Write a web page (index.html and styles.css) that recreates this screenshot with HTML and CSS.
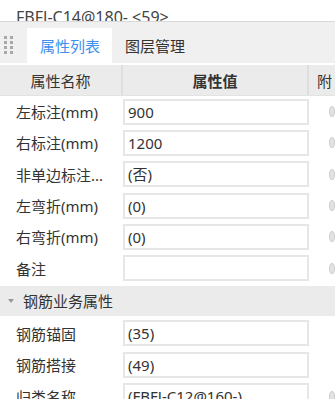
FILE: index.html
```html
<!DOCTYPE html>
<html lang="zh-CN">
<head>
    <meta charset="UTF-8">
    <meta name="viewport" content="width=device-width, initial-scale=1.0">
    <title>属性列表</title>
    <link rel="stylesheet" href="styles.css">
</head>
<body>
    <div class="top-strip">
        <span class="top-text">FBFJ-C14@180- &lt;59&gt;</span>
    </div>

    <div class="tabbar">
        <div class="grip">
            <i></i><i></i><i></i><i></i><i></i><i></i><i></i><i></i>
        </div>
        <div class="tab active">属性列表</div>
        <div class="tab">图层管理</div>
    </div>

    <div class="grid">
        <!-- 表头 -->
        <div class="head-row">
            <div class="cell head">属性名称</div>
            <div class="cell head strong">属性值</div>
            <div class="cell head extra">附</div>
        </div>

        <div class="row">
            <div class="cell name">左标注(mm)</div>
            <div class="cell"><div class="box">900</div></div>
            <div class="cell extra"><span class="radio"></span></div>
        </div>
        <div class="row">
            <div class="cell name">右标注(mm)</div>
            <div class="cell"><div class="box">1200</div></div>
            <div class="cell extra"><span class="radio"></span></div>
        </div>
        <div class="row">
            <div class="cell name">非单边标注...</div>
            <div class="cell"><div class="box">(否)</div></div>
            <div class="cell extra"><span class="radio"></span></div>
        </div>
        <div class="row">
            <div class="cell name">左弯折(mm)</div>
            <div class="cell"><div class="box">(0)</div></div>
            <div class="cell extra"><span class="radio"></span></div>
        </div>
        <div class="row">
            <div class="cell name">右弯折(mm)</div>
            <div class="cell"><div class="box">(0)</div></div>
            <div class="cell extra"><span class="radio"></span></div>
        </div>
        <div class="row">
            <div class="cell name">备注</div>
            <div class="cell"><div class="box"></div></div>
            <div class="cell extra"><span class="radio"></span></div>
        </div>

        <div class="group">
            <span class="caret"></span>
            钢筋业务属性
        </div>

        <div class="row">
            <div class="cell name">钢筋锚固</div>
            <div class="cell"><div class="box">(35)</div></div>
            <div class="cell extra"></div>
        </div>
        <div class="row">
            <div class="cell name">钢筋搭接</div>
            <div class="cell"><div class="box">(49)</div></div>
            <div class="cell extra"></div>
        </div>
        <div class="row">
            <div class="cell name">归类名称</div>
            <div class="cell"><div class="box">(FBFJ-C12@160-)</div></div>
            <div class="cell extra"><span class="radio"></span></div>
        </div>
    </div>
</body>
</html>
```

FILE: styles.css
```css
body {
    margin: 0;
    padding: 0;
    font-family: "Noto Sans", "Noto Sans CJK SC", sans-serif;
    font-size: 15px;
    color: #333;
    background-color: #fff;
    overflow: hidden;
    height: 399px;
}

.top-strip {
    height: 21px;
    overflow: hidden;
    border-bottom: 1px solid #d9d9d9;
    background-color: #fff;
}

.top-text {
    display: block;
    padding-left: 16px;
    margin-top: 6px;
    font-size: 16px;
    line-height: 22px;
    color: #444;
    white-space: pre;
}

.tabbar {
    display: flex;
    align-items: flex-end;
    height: 41px;
    background-color: #f0f0f0;
}

.grip {
    display: grid;
    grid-template-columns: 3px 3px;
    column-gap: 3px;
    row-gap: 2px;
    padding: 0 14px 9px 4px;
}

.grip i {
    width: 3px;
    height: 3px;
    background-color: #a8a8a8;
}

.tab {
    height: 35px;
    line-height: 36px;
    padding: 0 12px 0 13px;
    color: #333;
}

.tab.active {
    background-color: #fff;
    color: #3d8ff0;
}

.head-row,
.row {
    display: grid;
    grid-template-columns: 123px 186px 26px;
}

.head-row {
    height: 30px;
    margin-top: 2px;
    background-color: #ebebeb;
    border-bottom: 1px solid #e3e3e3;
}

.row {
    height: 31.3px;
}

.cell {
    display: flex;
    align-items: center;
    min-width: 0;
}

.head {
    justify-content: center;
    border-right: 2px solid #dedede;
}

.head.strong {
    font-weight: bold;
}

.head.extra {
    border-right: none;
    justify-content: flex-start;
    padding-left: 8px;
}

.name {
    padding-left: 16px;
    white-space: nowrap;
}

.box {
    box-sizing: border-box;
    width: 186px;
    height: 26px;
    border: 2px solid #e6e6e6;
    background-color: #fff;
    padding-left: 3px;
    line-height: 22px;
    white-space: nowrap;
    overflow: hidden;
}

.extra {
    overflow: hidden;
}

.radio {
    box-sizing: border-box;
    width: 11px;
    height: 11px;
    margin-left: 20px;
    border-radius: 50%;
    border: 1px solid #cdcdcd;
    background-color: #e2e2e2;
}

.group {
    display: flex;
    align-items: center;
    height: 30px;
    margin: 2px 0 2px;
    background-color: #ebebeb;
    color: #333;
}

.caret {
    width: 0;
    height: 0;
    margin: 0 9px 0 8px;
    border-left: 3px solid transparent;
    border-right: 3px solid transparent;
    border-top: 4px solid #999;
}
```
